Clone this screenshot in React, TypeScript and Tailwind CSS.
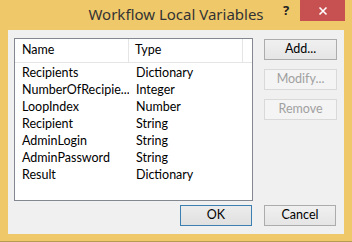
import React from "react";

const rows: [string, string][] = [
  ["Recipients", "Dictionary"],
  ["NumberOfRecipie...", "Integer"],
  ["LoopIndex", "Number"],
  ["Recipient", "String"],
  ["AdminLogin", "String"],
  ["AdminPassword", "String"],
  ["Result", "Dictionary"],
];

export default function App() {
  return (
    <div
      className="w-[352px] h-[242px] bg-[#efc86a] flex flex-col border-b border-[#b89a50] overflow-hidden"
      style={{ fontFamily: '"Noto Sans", "Open Sans", sans-serif' }}
    >
      {/* Title bar */}
      <div className="relative h-[30px] shrink-0">
        <div className="absolute left-0 right-0 top-[3px] text-center text-[15px] leading-[22px] text-[#333]">
          Workflow Local Variables
        </div>
        <div className="absolute left-[283px] top-[1px] text-[13px] font-bold text-[#222] leading-[18px]">?</div>
        <div className="absolute left-[300px] top-0 w-[45px] h-[21px] bg-[#c75050] flex items-center justify-center">
          <svg width="10" height="10" viewBox="0 0 10 10">
            <path d="M1.5 1.5 L8.5 8.5 M8.5 1.5 L1.5 8.5" stroke="#fff" strokeWidth="1.6" />
          </svg>
        </div>
      </div>
      {/* Content */}
      <div
        className="mx-[8px] h-[204px] bg-[#f0f0f0] flex flex-col pl-[6px] pt-[8px] text-[12.5px] text-black"
        style={{ fontFamily: 'Lato, "Noto Sans", sans-serif' }}
      >
        <div className="flex gap-[11px]">
          <div className="w-[239px] h-[163px] bg-white border border-[#828790] flex flex-col">
            <div className="flex h-[24px] border-b border-[#e5e5e5] shrink-0">
              <div className="w-[114px] pl-[7px] flex items-center border-r border-[#e5e5e5]">Name</div>
              <div className="w-[114px] pl-[6px] flex items-center border-r border-[#e5e5e5]">Type</div>
            </div>
            <div className="flex flex-col pt-[2px]">
              {rows.map(([n, t]) => (
                <div key={n} className="flex h-[17px] items-center">
                  <div className="w-[114px] pl-[7px] whitespace-nowrap overflow-hidden">{n}</div>
                  <div className="pl-[7px] whitespace-nowrap">{t}</div>
                </div>
              ))}
            </div>
          </div>
          <div className="flex flex-col gap-[9px] pt-[1px]">
            <button className="w-[73px] h-[21px] border border-[#acacac] bg-gradient-to-b from-[#f0f0f0] to-[#e5e5e5] text-black flex items-center justify-center">
              Add...
            </button>
            <button className="w-[73px] h-[21px] border border-[#d9d9d9] bg-[#f4f4f4] text-[#a0a0a0] flex items-center justify-center">
              Modify...
            </button>
            <button className="w-[73px] h-[21px] border border-[#d9d9d9] bg-[#f4f4f4] text-[#a0a0a0] flex items-center justify-center">
              Remove
            </button>
          </div>
        </div>
        <div className="flex justify-end gap-[12px] pr-[8px] mt-[4px]">
          <button className="w-[72px] h-[21px] border border-[#3c7fb1] bg-gradient-to-b from-[#ececec] to-[#e0e0e0] text-black flex items-center justify-center">
            OK
          </button>
          <button className="w-[72px] h-[21px] border border-[#acacac] bg-gradient-to-b from-[#f0f0f0] to-[#e5e5e5] text-black flex items-center justify-center">
            Cancel
          </button>
        </div>
      </div>
    </div>
  );
}
